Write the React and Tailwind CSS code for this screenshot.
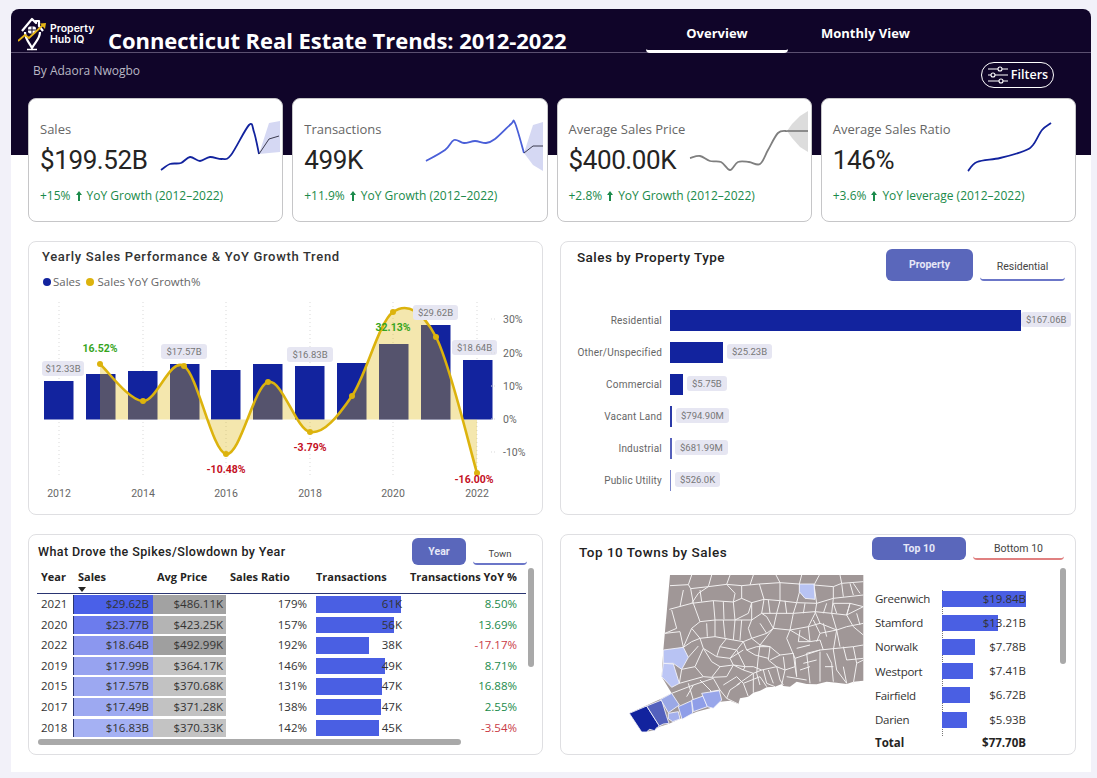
import { Fragment } from 'react';

// catmull-rom through the points, good enough for the power bi curves
const smooth = (pts) => {
  let d = `M${pts[0][0]} ${pts[0][1]}`;
  for (let i = 0; i < pts.length - 1; i++) {
    const p0 = pts[i - 1] || pts[i];
    const p1 = pts[i];
    const p2 = pts[i + 1];
    const p3 = pts[i + 2] || p2;
    const c1x = p1[0] + (p2[0] - p0[0]) / 6;
    const c1y = p1[1] + (p2[1] - p0[1]) / 6;
    const c2x = p2[0] - (p3[0] - p1[0]) / 6;
    const c2y = p2[1] - (p3[1] - p1[1]) / 6;
    d += ` C${c1x.toFixed(1)} ${c1y.toFixed(1)} ${c2x.toFixed(1)} ${c2y.toFixed(1)} ${p2[0]} ${p2[1]}`;
  }
  return d;
};

const kpis = [
  {
    title: 'Sales', value: '$199.52B', growth: 'YoY Growth (2012–2022)', delta: '+15%', view: '151 108 130 68', color: '#12239e', forecast: '#3b3b4f', bandColor: '#d5d8f3',
    line: [[162, 170], [171, 164], [182, 163], [191, 157], [201, 161], [211, 157], [223, 159], [232, 155], [250, 125], [255, 132], [260, 154]],
    ahead: '260,154 270,139 280,136',
    band: '260,154 270,123 281,121 281,152 270,153',
  },
  {
    title: 'Transactions', value: '499K', growth: 'YoY Growth (2012–2022)', delta: '+11.9%', view: '415 108 130 68', color: '#4a5fd8', forecast: '#3b3b4f', bandColor: '#d5d8f3',
    line: [[426, 161], [445, 150], [454, 140], [464, 143], [475, 141], [486, 143], [495, 139], [511, 124], [515, 123], [524, 153]],
    ahead: '524,153 533,146 543,146',
    band: '524,153 533,125 543,122 543,171 533,165',
  },
  {
    title: 'Average Sales Price', value: '$400.00K', growth: 'YoY Growth (2012–2022)', delta: '+2.8%', view: '679 108 130 68', color: '#7f7f7f', forecast: '#3b3b3b', bandColor: '#dcdcdc',
    line: [[690, 158], [700, 156], [710, 161], [721, 162], [730, 170], [738, 162], [749, 162], [760, 164], [768, 150], [778, 133], [787, 131]],
    ahead: '787,131 808,131',
    band: '787,131 792,124 800,116 808,111 808,152 800,147 792,138',
  },
  {
    title: 'Average Sales Ratio', value: '146%', growth: 'YoY leverage (2012–2022)', delta: '+3.6%', view: '943 108 130 68', color: '#12239e',
    line: [[968, 171], [977, 162], [1000, 158], [1024, 151], [1033, 145], [1042, 130], [1051, 123]],
  },
];

const bars = [
  [44, 381], [86, 374], [128, 371], [170, 364], [211, 370], [253, 364], [295, 366], [337, 363], [379, 344], [421, 325], [463, 360],
];
const growth = [
  [100, 364], [143, 401], [184, 366], [226, 454], [268, 382], [310, 432], [352, 396], [393, 312], [436, 337], [477, 473],
];
const yearTicks = [[2012, 59], [2014, 143], [2016, 226], [2018, 310], [2020, 393], [2022, 477]];
const pills = [
  ['$12.33B', 42, 361, 42], ['$17.57B', 161, 344, 46], ['$16.83B', 287, 347, 46], ['$29.62B', 413, 305, 45], ['$18.64B', 452, 340, 45],
];
const growthLabels = [
  ['16.52%', 100, 352, '#37a51e'], ['-10.48%', 226, 473, '#c4101f'], ['-3.79%', 310, 451, '#c4101f'], ['32.13%', 393, 331, '#37a51e'], ['-16.00%', 474, 483, '#c4101f'],
];

const propertyRows = [
  { label: 'Residential', value: '$167.06B', width: 351, gap: 0, bar: 'bg-[#12239e]' },
  { label: 'Other/Unspecified', value: '$25.23B', width: 53, gap: 4, bar: 'bg-[#12239e]' },
  { label: 'Commercial', value: '$5.75B', width: 13, gap: 4, bar: 'bg-[#12239e]' },
  { label: 'Vacant Land', value: '$794.90M', width: 2, gap: 4, bar: 'bg-[#2b3aa8]' },
  { label: 'Industrial', value: '$681.99M', width: 2, gap: 3, bar: 'bg-[#5560bb]' },
  { label: 'Public Utility', value: '$526.0K', width: 1, gap: 4, bar: 'bg-[#7a84c9]' },
];

const tableRows = [
  { year: 2021, sales: '$29.62B', salesBg: 'bg-[#4a60e8]', price: '$486.11K', priceBg: 'bg-[#a2a2a2]', ratio: '179%', trans: '61K', transW: 85, yoy: '8.50%', up: true },
  { year: 2020, sales: '$23.77B', salesBg: 'bg-[#6c7ced]', price: '$423.25K', priceBg: 'bg-[#b4b4b4]', ratio: '157%', trans: '56K', transW: 78, yoy: '13.69%', up: true },
  { year: 2022, sales: '$18.64B', salesBg: 'bg-[#8b97ef]', price: '$492.99K', priceBg: 'bg-[#9f9f9f]', ratio: '192%', trans: '38K', transW: 53, yoy: '-17.17%', up: false },
  { year: 2019, sales: '$17.99B', salesBg: 'bg-[#97a3f0]', price: '$364.17K', priceBg: 'bg-[#c4c4c4]', ratio: '146%', trans: '49K', transW: 69, yoy: '8.71%', up: true },
  { year: 2015, sales: '$17.57B', salesBg: 'bg-[#9ca8f1]', price: '$370.68K', priceBg: 'bg-[#c2c2c2]', ratio: '131%', trans: '47K', transW: 66, yoy: '16.88%', up: true },
  { year: 2017, sales: '$17.49B', salesBg: 'bg-[#9da9f1]', price: '$371.28K', priceBg: 'bg-[#c2c2c2]', ratio: '138%', trans: '47K', transW: 65, yoy: '2.55%', up: true },
  { year: 2018, sales: '$16.83B', salesBg: 'bg-[#a5b1f3]', price: '$370.33K', priceBg: 'bg-[#c3c3c3]', ratio: '142%', trans: '45K', transW: 63, yoy: '-3.54%', up: false },
];

const towns = [
  { name: 'Greenwich', value: '$19.84B', width: 84 },
  { name: 'Stamford', value: '$13.21B', width: 56 },
  { name: 'Norwalk', value: '$7.78B', width: 33 },
  { name: 'Westport', value: '$7.41B', width: 31 },
  { name: 'Fairfield', value: '$6.72B', width: 28 },
  { name: 'Darien', value: '$5.93B', width: 25 },
];

const townLines = [
  '150,47 205,44 212,56 265,50 320,43 365,47 418,42 480,38 538,42',
  '582,45 640,50 665,40 730,35',
  '148,118 215,100 280,92 340,96 365,85 395,98 432,88 480,92 530,98 590,100 640,85 730,75',
  '215,15 205,44', '275,15 265,50', '330,15 320,43', '400,15 390,45', '468,15 480,38', '545,15 538,42', '598,15 582,45', '660,15 665,40',
  '212,56 220,100 240,155 215,175 190,232',
  '280,92 285,150 285,200', '340,96 345,150 340,210', '365,47 365,85', '418,42 432,88 425,130 440,140',
  '480,38 480,92 470,130 460,175', '530,98 520,130 510,180 500,205', '590,100 585,130 565,170 570,215',
  '640,85 635,130 650,180 680,170', '582,45 590,100', '640,50 640,85', '690,40 700,75', '730,110 680,135 635,130 585,125 520,130 470,130 425,130 395,150 345,150 285,150 240,155',
  '730,195 700,170 680,135', '240,205 285,200 340,210 370,215 395,205 420,225 460,175 510,180 565,170 600,160 650,180',
  '135,190 180,185 190,232', '190,232 215,215 240,205 250,235 290,260 330,265 350,240 370,215', '205,262 235,228',
  '185,298 225,290 250,235', '178,340 250,320 275,322 320,320 340,285 330,265',
  '340,285 370,300 400,310 425,300 470,290 480,330 490,345', '370,215 380,240 410,230 450,230 445,270 470,290', '420,225 450,230',
  '500,205 525,265 530,320', '525,265 600,240 700,230 730,225', '570,215 600,210 610,240', '600,245 600,335', '640,240 650,300 680,340',
  '620,250 635,280 640,335', '700,230 710,280 730,270', '680,270 730,265', '480,255 520,250 525,290 495,300 490,260', '350,320 370,340 385,380',
  '310,345 350,320', '280,325 300,360', '370,340 420,320 440,350', '405,255 445,265', '375,290 400,290 425,300', '415,260 410,310 420,345',
  '580,150 600,190 590,215', '205,340 220,390', '240,330 275,365', '155,370 220,345 280,325', '395,150 385,175 395,205', '345,150 385,130 395,98',
  '440,140 460,175', '680,135 690,100 730,110', '570,215 510,180', '330,265 370,240', '360,340 330,360 320,385', '500,320 560,330',
  '395,98 395,150', '155,120 170,175 135,190', '215,175 240,205', '530,98 540,60 538,42', '585,125 600,160', '620,100 610,130', '640,100 690,100',
  '680,170 730,160', '650,180 640,240', '600,190 650,180', '440,190 460,175', '395,205 440,190', '420,225 415,260', '450,230 480,255',
  '350,240 375,290 370,300', '375,290 340,285', '380,240 405,255', '525,290 530,320', '495,300 485,345', '470,290 495,300',
  '300,360 320,385 355,402', '225,290 250,320', '185,298 178,340', '200,380 220,345', '270,365 300,360', '680,340 670,290', '710,280 700,340',
  '600,240 560,250 570,340', '670,230 680,270', '215,100 235,70 265,50', '320,43 345,70 340,96', '420,160 440,190', '300,230 320,205', '445,300 460,340', '540,300 570,290',
  '665,40 670,80', '700,40 720,70', '640,100 650,130', '690,100 680,135', '710,130 720,165', '275,322 300,290 340,285', '250,235 275,275 300,290',
  '400,310 400,368', '350,345 400,310', '430,300 440,340 465,350', '290,260 300,230', '260,160 262,200', '310,95 312,148', '310,150 315,203',
  '365,150 360,210', '445,90 450,130', '500,130 495,92', '555,100 550,130', '610,160 620,200', '540,180 535,215 570,215', '530,235 570,225',
  '450,270 480,255', '550,280 590,270', '615,290 640,290', '660,230 650,180', '350,240 300,230', '240,60 245,95', '180,110 190,60',
];

const coloredTowns = [
  ['28,430 80,408 118,468 108,475 104,482 88,478 80,486 65,486', '#12239e'],
  ['80,408 125,390 140,440 147,460 130,462 118,468', '#5461bd'],
  ['122,388 155,370 178,405 145,428', '#9aa8e6'],
  ['145,430 175,425 180,447 158,455 145,446', '#a4b0ec'],
  ['175,410 215,392 218,430 186,448', '#8f9ee8'],
  ['215,390 250,378 262,410 220,425', '#8f9ee8'],
  ['245,370 298,362 305,390 280,415 262,410', '#98a6ea'],
  ['130,240 190,232 205,262 185,298 160,280 130,280', '#b8c3f3'],
  ['130,280 160,282 178,340 155,352 125,320', '#bcc6f5'],
  ['538,42 582,42 585,88 555,85 538,65', '#b8c3f3'],
];

const Logo = () => (
  <svg width="30" height="34" viewBox="0 0 30 34" fill="none" className="shrink-0">
    <path d="M4 14 L14 2 L18 6 L18 4 L21 4 L21 9 L25 14" stroke="#fff" strokeWidth="2.2" strokeLinejoin="round" />
    <path d="M7 15 C7 22 11 25 14 31 C17 25 22 22 22 15" stroke="#fff" strokeWidth="2.2" />
    <rect x="10" y="9.5" width="8" height="7" rx="2" fill="#fff" />
    <path d="M14 9.5v7M10 13h8" stroke="#100529" strokeWidth="1" />
    <path d="M0 24 L7 18 L11 21 L25 8" stroke="#e5b516" strokeWidth="1.8" />
    <path d="M22 6.5 L28 6 L27 12 Z" fill="#e5b516" />
    <path d="M9 32.5 L19 32.5" stroke="#fff" strokeWidth="1.5" />
  </svg>
);

const FilterIcon = () => (
  <svg width="22" height="20" viewBox="0 0 22 20" fill="none" stroke="#fff" strokeWidth="1.1">
    <path d="M1 4h10M15 4h6M1 10h3M8 10h13M1 16h11M16 16h5" />
    <circle cx="13" cy="4" r="2" />
    <circle cx="6" cy="10" r="2" />
    <circle cx="14" cy="16" r="2" />
  </svg>
);

const UpArrow = () => (
  <svg width="6" height="10" viewBox="0 0 6 10" className="inline-block mx-[5px] align-[-1px]" fill="#1a8a4a">
    <path d="M3 0L6 4H4V10H2V4H0z" />
  </svg>
);

const KpiCard = ({ kpi }) => (
  <div className="h-[124px] bg-white border border-[#c6c6c8] rounded-lg overflow-hidden flex flex-col pl-[11px]">
    <div className="flex justify-between pr-[2px]">
      <div className="flex flex-col w-[108px] pt-[20px] whitespace-nowrap">
        <span className="text-[13px] leading-[20px] text-[#666]">{kpi.title}</span>
        <span className="text-[26px] leading-[34px] mt-[4px] tracking-[-0.4px] text-[#252423] font-['Roboto',sans-serif]">{kpi.value}</span>
      </div>
      <svg width="130" height="68" viewBox={kpi.view} className="mt-[9px] shrink-0" fill="none">
        {kpi.band && <polygon points={kpi.band} fill={kpi.bandColor} />}
        <path d={smooth(kpi.line)} stroke={kpi.color} strokeWidth="1.8" />
        {kpi.ahead && <polyline points={kpi.ahead} stroke={kpi.forecast} strokeWidth="1" />}
      </svg>
    </div>
    <span className="mt-[10px] text-[12px] leading-[18px] text-[#1a8a4a] whitespace-nowrap">
      {kpi.delta}
      <UpArrow />
      {kpi.growth}
    </span>
  </div>
);

const YearlyChart = () => {
  const line = smooth(growth);
  return (
    <svg width="513" height="215" viewBox="29 295 513 215" className="block mt-[3px] font-['Roboto',sans-serif]" fill="none">
      {yearTicks.map(([year, x]) => (
        <Fragment key={year}>
          <path d={`M${x} 302V478`} stroke="#d9d9d9" strokeDasharray="1 3" />
          <text x={x} y="497" textAnchor="middle" fontSize="10.5" fill="#666">{year}</text>
        </Fragment>
      ))}
      {bars.map(([x, y]) => (
        <rect key={x} x={x} y={y} width="29.5" height={419.5 - y} fill="#12239e" />
      ))}
      <path d={`${line} L477 419.5 L100 419.5 Z`} fill="#dfb508" fillOpacity="0.33" />
      <path d={line} stroke="#dcb30d" strokeWidth="2.6" />
      {growth.map(([x, y]) => (
        <circle key={x} cx={x} cy={y} r="3" fill="#dcb30d" />
      ))}
      {pills.map(([text, x, y, w]) => (
        <Fragment key={text}>
          <rect x={x} y={y} width={w} height="15" rx="3" fill="#e6e6f2" />
          <text x={x + w / 2} y={y + 11} textAnchor="middle" fontSize="9.5" fill="#777">{text}</text>
        </Fragment>
      ))}
      {growthLabels.map(([text, x, y, color]) => (
        <text key={text} x={x} y={y} textAnchor="middle" fontSize="10.5" fontWeight="700" fill={color}>{text}</text>
      ))}
      {[['30%', 319], ['20%', 353], ['10%', 386], ['0%', 419], ['-10%', 452]].map(([text, y]) => (
        <Fragment key={text}>
          <path d={`M491 ${y}H496`} stroke="#d9d9d9" strokeDasharray="1 2" />
          <text x="503" y={y + 3.5} fontSize="10.5" fill="#666">{text}</text>
        </Fragment>
      ))}
    </svg>
  );
};

const TabButton = ({ className, children }) => (
  <div className={`flex items-center justify-center bg-[#5a67bb] text-[#e6e8f7] font-bold font-['Roboto',sans-serif] ${className}`}>{children}</div>
);

const TabLink = ({ className, children }) => (
  <div className={`flex items-center justify-center text-[#444] font-['Roboto',sans-serif] border-b-2 rounded-b-sm ${className}`}>{children}</div>
);

const ScrollThumb = ({ className }) => <div className={`absolute bg-[#a9a9a9] rounded-full ${className}`} />;

const App = () => (
  <div className="w-[1097px] h-[778px] overflow-hidden bg-[#f2f1f9] pt-[9px] pl-[11px] font-['Open_Sans',sans-serif]">
    <div className="w-[1080px] h-[763px] rounded-t-lg bg-[linear-gradient(#100529_146px,#ffffff_146px)] flex flex-col">
      {/* Title bar */}
      <div className="h-[44px] border-b border-[#5b5070] flex pl-[7px] text-white">
        <div className="flex items-center w-[90px] gap-[2px] pt-[7px] shrink-0">
          <Logo />
          <div className="text-[10.5px] leading-[11px] font-semibold font-['Inter',sans-serif]">Property<br />Hub IQ</div>
        </div>
        <h1 className="text-[22px] leading-[30px] mt-[16px] font-bold whitespace-nowrap w-[538px] shrink-0 tracking-[-0.05px]">Connecticut Real Estate Trends: 2012-2022</h1>
        <div className="w-[142px] h-[44px] border-b-[3px] border-white rounded-b-sm flex items-center justify-center text-[13px] font-bold pt-[9px] shrink-0">Overview</div>
        <div className="w-[155px] h-[44px] flex items-center justify-center text-[13px] font-bold pt-[6px] shrink-0">Monthly View</div>
      </div>

      <div className="h-[45px] flex pl-[22px] pr-[37px] pt-[9px] justify-between text-white">
        <span className="text-[12px] leading-[18px] text-[#b9b8c4]">By Adaora Nwogbo</span>
        <div className="h-[26px] w-[73px] border border-white rounded-full flex items-center justify-center gap-[2px] text-[12.5px] font-semibold">
          <FilterIcon />
          Filters
        </div>
      </div>

      {/* KPI cards */}
      <div className="pl-[17px] pr-[15px] grid grid-cols-4 gap-[9px]">
        {kpis.map((kpi) => <KpiCard key={kpi.title} kpi={kpi} />)}
      </div>

      <div className="pl-[17px] pr-[15px] mt-[19px] grid grid-cols-[515px_516px] gap-x-[17px] gap-y-[19px]">
        {/* Yearly sales */}
        <div className="h-[274px] border border-[#dfdfe2] rounded-lg bg-white overflow-hidden">
          <h2 className="ml-[13px] mt-[5px] text-[13px] leading-[20px] tracking-[0.67px] text-[#333] font-medium font-['Roboto',sans-serif]">Yearly Sales Performance &amp; YoY Growth Trend</h2>
          <div className="ml-[14px] mt-[5px] h-[20px] flex items-center text-[11.5px] text-[#666]">
            <span className="w-[8px] h-[8px] rounded-full bg-[#12239e] mr-[2px]" />
            Sales
            <span className="w-[8px] h-[8px] rounded-full bg-[#dcb30d] ml-[5px] mr-[4px]" />
            Sales YoY Growth%
          </div>
          <YearlyChart />
        </div>

        {/* Property type */}
        <div className="h-[274px] border border-[#dfdfe2] rounded-lg bg-white overflow-hidden">
          <div className="flex h-[62px] pr-[10px]">
            <h2 className="ml-[16px] mt-[5px] text-[13.5px] leading-[20px] tracking-[0.45px] text-[#222] font-medium font-['Roboto',sans-serif]">Sales by Property Type</h2>
            <div className="ml-auto mt-[7px] flex gap-[7px] h-[32px]">
              <TabButton className="w-[87px] rounded-md text-[10.5px]">Property</TabButton>
              <TabLink className="w-[85px] text-[10.5px] pt-[5px] border-[#6b76c8]">Residential</TabLink>
            </div>
          </div>
          <div className="flex flex-col">
            {propertyRows.map((row) => (
              <div key={row.label} className="h-[32px] flex items-center">
                <span className="w-[101px] shrink-0 text-right text-[10px] text-[#666] tracking-[0.2px] font-['Roboto',sans-serif]">{row.label}</span>
                <div className={`ml-[8px] h-[21px] shrink-0 ${row.bar}`} style={{ width: row.width }} />
                <span className="h-[15px] px-[5px] mb-[1px] bg-[#e6e6f2] rounded-[3px] text-[9.5px] leading-[15px] text-[#777] whitespace-nowrap font-['Roboto',sans-serif]" style={{ marginLeft: row.gap }}>{row.value}</span>
              </div>
            ))}
          </div>
        </div>

        {/* Table */}
        <div className="relative h-[221px] border border-[#dfdfe2] rounded-lg bg-white overflow-hidden pl-[8px]">
          <div className="flex h-[32px] pr-[15px]">
            <h2 className="ml-[1px] mt-[7px] text-[12.5px] leading-[20px] tracking-[0.4px] text-[#222] font-medium font-['Roboto',sans-serif]">What Drove the Spikes/Slowdown by Year</h2>
            <div className="ml-auto mt-[3px] flex gap-[7px] h-[27px]">
              <TabButton className="w-[54px] rounded-md text-[10.5px]">Year</TabButton>
              <TabLink className="w-[54px] text-[9.5px] pt-[8px] border-[#6b76c8]">Town</TabLink>
            </div>
          </div>
          <div className="relative w-[489px] h-[27px] border-b border-[#2a3572] text-[11px] font-bold text-[#252423] leading-[20px] flex whitespace-nowrap">
            <span className="w-[41px] pl-[4px]">Year</span>
            <span className="w-[79px]">Sales</span>
            <span className="w-[73px]">Avg Price</span>
            <span className="w-[86px]">Sales Ratio</span>
            <span className="w-[94px]">Transactions</span>
            <span>Transactions YoY %</span>
            <svg width="8" height="5" viewBox="0 0 8 5" className="absolute left-[41px] top-[20px]"><path d="M0 0h8L4 5z" fill="#252423" /></svg>
          </div>
          <div className="h-[144px] pt-[1px] overflow-hidden">
            {tableRows.map((row) => (
              <div key={row.year} className="h-[20.6px] w-[489px] flex text-[11.5px] leading-[18.5px] text-[#333]">
                <span className="w-[36px] pl-[4px]">{row.year}</span>
                <div className={`w-[80px] h-[18.5px] text-right pr-[4px] border-l border-[#2a3572] ${row.salesBg}`}>{row.sales}</div>
                <div className={`w-[73px] h-[18.5px] text-right pr-[3px] ${row.priceBg}`}>{row.price}</div>
                <div className="w-[90px] text-right pr-[9px]">{row.ratio}</div>
                <div className="relative w-[86px] h-[18.5px] text-right">
                  <div className="absolute left-0 top-[1px] h-[16.5px] bg-[#4a5fe3]" style={{ width: row.transW }} />
                  <span className="relative">{row.trans}</span>
                </div>
                <div className={`w-[115px] text-right ${row.up ? 'text-[#1a8a4a]' : 'text-[#c93a46]'}`}>{row.yoy}</div>
              </div>
            ))}
          </div>
          <ScrollThumb className="left-[9px] top-[204px] w-[423px] h-[6px]" />
          <ScrollThumb className="left-[499px] top-[33px] w-[6px] h-[99px]" />
        </div>

        {/* Towns */}
        <div className="relative h-[221px] border border-[#dfdfe2] rounded-lg bg-white overflow-hidden">
          <div className="flex h-[35px] pr-[11px]">
            <h2 className="ml-[18px] mt-[7px] text-[13.5px] leading-[20px] tracking-[0.5px] text-[#222] font-medium font-['Roboto',sans-serif]">Top 10 Towns by Sales</h2>
            <div className="ml-auto mt-[2px] flex gap-[7px] h-[23px]">
              <TabButton className="w-[94px] rounded-md text-[10.5px]">Top 10</TabButton>
              <TabLink className="w-[91px] text-[10.5px] pt-[3px] border-[#e08080]">Bottom 10</TabLink>
            </div>
          </div>
          <div className="flex">
            <svg width="250" height="180" viewBox="0 0 750 540" className="ml-[59px] shrink-0">
              <polygon
                points="150,15 730,15 730,332 700,335 680,342 650,338 620,335 590,343 560,342 530,335 510,350 490,348 485,342 465,350 440,352 420,362 400,368 385,380 360,385 355,402 330,392 300,395 270,415 230,425 180,447 145,462 118,470 100,482 65,486 28,430 120,388 155,370 125,320 130,240"
                fill="#a09797"
              />
              {townLines.map((points) => (
                <polyline key={points} points={points} fill="none" stroke="#f2f0f0" strokeWidth="3" />
              ))}
              {coloredTowns.map(([points, fill]) => (
                <polygon key={points} points={points} fill={fill} stroke="#f4f4fb" strokeWidth="2.6" />
              ))}
            </svg>
            <div className="relative ml-[5px] w-[151px] mt-[16.5px] text-[11.5px] text-[#333]">
              <div className="absolute left-[67px] top-[3px] h-[146px] border-l border-dotted border-[#777]" />
              {towns.map((town) => (
                <div key={town.name} className="h-[24.2px] flex items-center">
                  <span className="w-[67px] tracking-[-0.25px]">{town.name}</span>
                  <div className="relative w-[84px] h-[16px] text-right leading-[16px]">
                    <div className="absolute left-0 top-0 h-[16px] bg-[#4a5fe3]" style={{ width: town.width }} />
                    <span className="relative">{town.value}</span>
                  </div>
                </div>
              ))}
              <div className="h-[22px] flex items-center justify-between font-bold text-[#252423] whitespace-nowrap">
                <span>Total</span>
                <span>$77.70B</span>
              </div>
            </div>
          </div>
          <ScrollThumb className="left-[499px] top-[33px] w-[6px] h-[96px]" />
        </div>
      </div>
    </div>
  </div>
);

export default App;
